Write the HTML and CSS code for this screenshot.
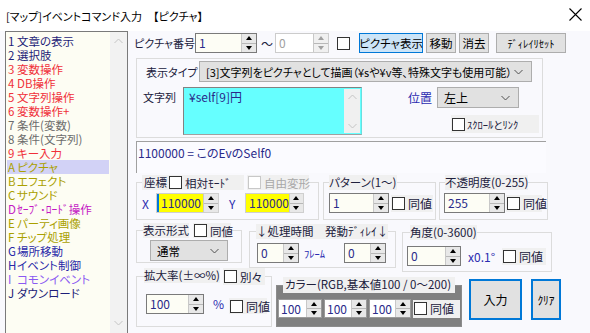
FILE: index.html
```html
<!DOCTYPE html>
<html lang="ja">
<head>
<meta charset="utf-8">
<link rel="stylesheet" href="styles.css">
</head>
<body>
<div class="titlebar">
  <span class="title">[マップ]イベントコマンド入力　【ピクチャ】</span>
  <svg class="close" width="13" height="13" viewBox="0 0 13 13"><path d="M0.5 0.5 L12.5 12.5 M12.5 0.5 L0.5 12.5" stroke="#000" stroke-width="1.1" fill="none"/></svg>
</div>
<div class="main">
  <div class="cmdlist">
    <ul class="items">
      <li class="c-navy"><span class="no">1</span>文章の表示</li>
      <li class="c-navy"><span class="no">2</span>選択肢</li>
      <li class="c-red"><span class="no">3</span>変数操作</li>
      <li class="c-red"><span class="no">4</span>DB操作</li>
      <li class="c-red"><span class="no">5</span>文字列操作</li>
      <li class="c-red"><span class="no">6</span>変数操作+</li>
      <li class="c-gray"><span class="no">7</span>条件(変数)</li>
      <li class="c-gray"><span class="no">8</span>条件(文字列)</li>
      <li class="c-red"><span class="no">9</span>キー入力</li>
      <li class="c-olive sel"><span class="no">A</span>ピクチャ</li>
      <li class="c-olive"><span class="no">B</span>エフェクト</li>
      <li class="c-olive"><span class="no">C</span>サウンド</li>
      <li class="c-mag"><span class="no">D</span>ｾｰﾌﾞ･ﾛｰﾄﾞ操作</li>
      <li class="c-olive"><span class="no">E</span>パーティ画像</li>
      <li class="c-olive"><span class="no">F</span>チップ処理</li>
      <li class="c-blue"><span class="no">G</span>場所移動</li>
      <li class="c-blue"><span class="no">H</span>イベント制御</li>
      <li class="c-violet"><span class="no">I</span>コモンイベント</li>
      <li class="c-navy"><span class="no">J</span>ダウンロード</li>
    </ul>
    <div class="vscroll">
      <svg width="9" height="6" viewBox="0 0 9 6"><path d="M0.5 5 L4.5 1 L8.5 5" stroke="#c4c4c4" fill="none"/></svg>
      <svg width="9" height="6" viewBox="0 0 9 6"><path d="M0.5 1 L4.5 5 L8.5 1" stroke="#c4c4c4" fill="none"/></svg>
    </div>
  </div>

  <div class="panel">
    <div class="row1">
      <span class="lbl w-num">ピクチャ番号</span>
      <span class="spin w62"><span class="val">1</span><span class="arrows"><i class="up"></i><i class="dn"></i></span></span>
      <span class="tilde">～</span>
      <span class="spin w54 disabled"><span class="val">0</span><span class="arrows"><i class="up"></i><i class="dn"></i></span></span>
      <span class="box top-cb"></span>
      <span class="btn b-show">ピクチャ表示</span>
      <span class="btn b-move">移動</span>
      <span class="btn b-erase">消去</span>
      <span class="btn b-delay">ﾃﾞｨﾚｲﾘｾｯﾄ</span>
    </div>

    <div class="typebox">
      <div class="type-row">
        <span class="lbl w-type">表示タイプ</span>
        <span class="combo w-typecombo"><span class="ctext">[3]文字列をピクチャとして描画（¥sや¥v等、特殊文字も使用可能）</span><svg class="chev" width="9" height="6" viewBox="0 0 9 6"><path d="M0.5 1 L4.5 5 L8.5 1" stroke="#505050" fill="none"/></svg></span>
      </div>
      <div class="str-row">
        <span class="lbl w-str">文字列</span>
        <div class="strarea">
          <span class="strtext">¥self[9]円</span>
          <span class="areascroll">
            <svg width="9" height="6" viewBox="0 0 9 6"><path d="M0.5 5 L4.5 1 L8.5 5" stroke="#c4c4c4" fill="none"/></svg>
            <svg width="9" height="6" viewBox="0 0 9 6"><path d="M0.5 1 L4.5 5 L8.5 1" stroke="#c4c4c4" fill="none"/></svg>
          </span>
        </div>
        <div class="poscol">
          <div class="pos-row">
            <span class="lbl blue w-pos">位置</span>
            <span class="combo w-poscombo"><span class="ctext">左上</span><svg class="chev" width="9" height="6" viewBox="0 0 9 6"><path d="M0.5 1 L4.5 5 L8.5 1" stroke="#505050" fill="none"/></svg></span>
          </div>
          <label class="chk scrolllink"><span class="box"></span><span class="small">ｽｸﾛｰﾙとﾘﾝｸ</span></label>
        </div>
      </div>
    </div>

    <div class="info">1100000 = このEvのSelf0</div>

    <div class="grouprow gr1">
      <fieldset class="grp g-coord">
        <legend><span class="lg">座標</span><label class="chk lgchk w76"><span class="box"></span>相対ﾓｰﾄﾞ</label><label class="chk lgchk dis w62"><span class="box"></span>自由変形</label></legend>
        <div class="gbody coord-body">
          <span class="axis w-x">X</span>
          <span class="spin w63 yellow focus"><span class="val">110000</span><span class="arrows"><i class="up"></i><i class="dn"></i></span></span>
          <span class="axis w-y">Y</span>
          <span class="spin w59 yellow"><span class="val">110000</span><span class="arrows"><i class="up"></i><i class="dn"></i></span></span>
        </div>
      </fieldset>
      <fieldset class="grp g-pat">
        <legend><span class="lg">パターン(1～)</span></legend>
        <div class="gbody pat-body">
          <span class="spin w60"><span class="val">1</span><span class="arrows"><i class="up"></i><i class="dn"></i></span></span>
          <label class="chk bgchk w42"><span class="box"></span>同値</label>
        </div>
      </fieldset>
      <fieldset class="grp g-opa">
        <legend><span class="lg">不透明度(0-255)</span></legend>
        <div class="gbody opa-body">
          <span class="spin w61"><span class="val">255</span><span class="arrows"><i class="up"></i><i class="dn"></i></span></span>
          <label class="chk bgchk w36"><span class="box"></span>同値</label>
        </div>
      </fieldset>
    </div>

    <div class="grouprow gr2">
      <fieldset class="grp g-fmt">
        <legend><span class="lg">表示形式</span><label class="chk lgchk w38 ml4"><span class="box"></span>同値</label></legend>
        <div class="gbody fmt-body">
          <span class="combo w-fmtcombo"><span class="ctext">通常</span><svg class="chev" width="9" height="6" viewBox="0 0 9 6"><path d="M0.5 1 L4.5 5 L8.5 1" stroke="#505050" fill="none"/></svg></span>
        </div>
      </fieldset>
      <fieldset class="grp g-proc">
        <legend><span class="lg">↓処理時間　発動ﾃﾞｨﾚｲ↓</span></legend>
        <div class="gbody proc-body">
          <span class="spin w42"><span class="val">0</span><span class="arrows"><i class="up"></i><i class="dn"></i></span></span>
          <span class="unit small w-frame">ﾌﾚｰﾑ</span>
          <span class="spin w42"><span class="val">0</span><span class="arrows"><i class="up"></i><i class="dn"></i></span></span>
        </div>
      </fieldset>
      <fieldset class="grp g-ang">
        <legend><span class="lg">角度(0-3600)</span></legend>
        <div class="gbody ang-body">
          <span class="spin w54"><span class="val">0</span><span class="arrows"><i class="up"></i><i class="dn"></i></span></span>
          <span class="unit latin w-deg">x0.1°</span>
          <label class="chk bgchk w44"><span class="box"></span>同値</label>
        </div>
      </fieldset>
    </div>

    <div class="grouprow gr3">
      <fieldset class="grp g-scale">
        <legend><span class="lg">拡大率(±∞%)</span><label class="chk lgchk tall w42 ml3"><span class="box"></span>別々</label></legend>
        <div class="gbody scale-body">
          <span class="spin w58"><span class="val">100</span><span class="arrows"><i class="up"></i><i class="dn"></i></span></span>
          <span class="unit latin w-pct">%</span>
          <label class="chk bgchk w38 pct-chk"><span class="box"></span>同値</label>
        </div>
      </fieldset>
      <fieldset class="grp g-color">
        <legend><span class="lg colorlg">カラー(RGB,基本値100 / 0～200)</span></legend>
        <div class="gbody color-body">
          <span class="spin w44 white"><span class="val">100</span><span class="arrows"><i class="up"></i><i class="dn"></i></span></span>
          <span class="spin w43 white"><span class="val">100</span><span class="arrows"><i class="up"></i><i class="dn"></i></span></span>
          <span class="spin w42 white"><span class="val">100</span><span class="arrows"><i class="up"></i><i class="dn"></i></span></span>
          <label class="chk bgchk light w47"><span class="box"></span>同値</label>
        </div>
      </fieldset>
      <span class="bigbtn b-enter">入力</span>
      <span class="bigbtn b-clear">ｸﾘｱ</span>
    </div>
  </div>
</div>
</body>
</html>
```

FILE: styles.css
```css
* { box-sizing: border-box; }
html, body { margin: 0; padding: 0; }
body {
  width: 590px;
  height: 333px;
  overflow: hidden;
  background: #f9f9fd;
  font-family: "Noto Sans CJK JP", "Noto Sans", sans-serif;
  font-feature-settings: "palt";
  font-size: 11px;
  color: #20203c;
}

/* title bar */
.titlebar {
  height: 31px;
  background: #ffffff;
  display: flex;
  align-items: center;
  justify-content: space-between;
  padding: 0 8px 0 6px;
}
.title { font-size: 11px; color: #000; }
.close { margin-top: -2px; }

.main { display: flex; align-items: flex-start; }

/* left list */
.cmdlist {
  margin-left: 5px;
  width: 123px;
  height: 310px;
  border: 1px solid #7a7a7a;
  border-bottom: none;
  background: #fdfdf3;
  display: flex;
}
.items {
  list-style: none;
  margin: 0;
  padding: 2px 0 0 1px;
  width: 103px;
  font-size: 11.5px;
  line-height: 14px;
}
.items li { height: 14px; white-space: nowrap; display: flex; }
.items li .no { width: 10px; padding-left: 1px; }
.items li.sel { background: #d2d2f6; }
.c-navy { color: #1e1e78; }
.c-red { color: #f0303a; }
.c-gray { color: #6c6c6c; }
.c-olive { color: #aaa000; }
.c-mag { color: #c418c4; }
.c-blue { color: #2828a8; }
.c-violet { color: #8a5af2; }
.vscroll {
  width: 17px;
  margin-left: auto;
  background: #f2f2f2;
  display: flex;
  flex-direction: column;
  justify-content: space-between;
  align-items: center;
  padding: 6px 0 15px;
}

/* right panel */
.panel { margin-left: 6px; padding-top: 2px; width: 452px; }

.lbl { display: inline-block; white-space: nowrap; }
.blue { color: #2b2bb0; }
.small { font-size: 10.5px; }
.latin { font-size: 12px; }

.row1 { display: flex; align-items: center; height: 20px; }
.w-num { width: 61px; }
.tilde { width: 14px; margin-left: 4px; font-size: 12px; }
.top-cb { margin-left: 8px; }

/* spin edit */
.spin {
  display: flex;
  height: 20px;
  border: 1px solid #7a7a7a;
  background: #fdfdf5;
  color: #2a2a8a;
  font-size: 12px;
}
.spin .val { flex: 1; padding-left: 3px; line-height: 18px; }
.spin .arrows {
  width: 15px;
  display: flex;
  flex-direction: column;
  border-left: 1px solid #c8c8c8;
}
.spin .arrows i {
  flex: 1;
  background: #e8e8e8;
  display: flex;
  align-items: center;
  justify-content: center;
}
.spin .arrows i + i { border-top: 1px solid #b8b8b8; }
.spin .arrows i::before {
  content: "";
  border-left: 3px solid transparent;
  border-right: 3px solid transparent;
}
.spin .arrows .up::before { border-bottom: 4px solid #000; }
.spin .arrows .dn::before { border-top: 4px solid #000; }
.spin.disabled { border-color: #cccccc; background: #ffffff; color: #a0a0a0; }
.spin.disabled .arrows i { background: #f0f0f0; }
.spin.disabled .arrows i::before { border-bottom-color: #a0a0a0; border-top-color: #a0a0a0; }
.spin.yellow { border-color: #cfcfcf; }
.spin.yellow .val { background: #ffff00; color: #2a2a8a; }
.spin.focus .val { border-left: 2px solid #0078d7; padding-left: 2px; }
.spin.white { border-color: #9a9a9a; background: #ffffff; height: 19px; }
.spin.white .val { line-height: 17px; padding-left: 2px; }

.w62 { width: 62px; }
.w54 { width: 54px; }
.w63 { width: 63px; }
.w59 { width: 59px; }
.w60 { width: 60px; }
.w61 { width: 61px; }
.w42 { width: 42px; }
.w58 { width: 58px; }
.w44 { width: 44px; }
.w43 { width: 43px; }
.w76 { width: 76px; }
.w38 { width: 38px; }
.w36 { width: 36px; }
.w47 { width: 47px; }

/* checkbox */
.box {
  display: inline-block;
  width: 13px;
  height: 13px;
  border: 1px solid #333333;
  background: #ffffff;
  flex: none;
}
.chk { display: inline-flex; align-items: center; gap: 3px; white-space: nowrap; font-size: 12px; }
.chk.dis { color: #a8a8a8; }
.chk.dis .box { border-color: #c8c8c8; }
.bgchk { background: #f0f0f0; height: 17px; padding-left: 1px; }
.bgchk.light { background: #f0f0f0; }

/* buttons */
.btn {
  height: 20px;
  display: inline-flex;
  align-items: center;
  justify-content: center;
  background: #e1e1e1;
  border: 1px solid #adadad;
  color: #000;
  white-space: nowrap;
  font-size: 11.5px;
}
.b-show { width: 64px; margin-left: 9px; background: #cce4f7; border-color: #0078d7; }
.b-move { width: 30px; margin-left: 3px; }
.b-erase { width: 30px; margin-left: 3px; }
.b-delay { width: 70px; margin-left: 7px; font-size: 10.5px; }

/* combo */
.combo {
  display: flex;
  align-items: center;
  height: 21px;
  background: #e1e1e1;
  border: 1px solid #adadad;
  color: #000;
  padding: 0 8px 0 6px;
  font-size: 11.5px;
}
.combo .ctext { flex: 1; white-space: nowrap; overflow: hidden; }
.combo .chev { flex: none; }

/* type box */
.typebox {
  margin-top: 5px;
  margin-left: 2px;
  width: 407px;
  height: 80px;
  border: 1px solid #dcdcdc;
  padding: 2px 0 0 0;
}
.type-row { display: flex; align-items: center; padding-left: 9px; }
.w-type { width: 53px; }
.w-typecombo { width: 333px; font-size: 11px; }
.str-row { display: flex; align-items: flex-start; margin-top: 5px; padding-left: 6px; }
.w-str { width: 40px; line-height: 18px; padding-top: 1px; }
.strarea {
  width: 179px;
  height: 48px;
  background: #66ffff;
  border-top: 1px solid #828282;
  border-left: 1px solid #828282;
  border-bottom: 1px solid #a0a0a0;
  border-right: 1px solid #66e0e0;
  display: flex;
  color: #2a2a8a;
  font-size: 12px;
}
.strtext { flex: 1; padding: 1px 0 0 5px; line-height: 16px; }
.areascroll {
  width: 16px;
  background: #f0f0f0;
  margin: 1px 1px 1px 0;
  display: flex;
  flex-direction: column;
  justify-content: space-between;
  align-items: center;
  padding: 5px 0 4px;
}
.poscol { margin-left: 46px; display: flex; flex-direction: column; }
.pos-row { display: flex; align-items: center; }
.w-pos { width: 29px; font-size: 12px; }
.w-poscombo { width: 82px; font-size: 12px; }
.scrolllink {
  margin-top: 7px;
  margin-left: 43px;
  width: 88px;
  height: 18px;
  background: #f0f0f0;
  padding-left: 1px;
  gap: 2px;
}

/* info */
.info {
  margin-top: 3px;
  margin-left: 2px;
  width: 410px;
  height: 32px;
  border-top: 1px solid #a0a0a0;
  border-left: 1px solid #a0a0a0;
  background: #fbfbff;
  color: #2a2a8a;
  padding: 3px 0 0 1px;
  line-height: 16px;
  font-size: 12px;
}

/* group rows */
.grouprow { display: flex; align-items: flex-start; }
.gr1 { margin-top: 2px; height: 45px; }
.gr2 { margin-top: 3px; height: 45px; }
.gr3 { height: 59px; }

.grp {
  margin: 0;
  padding: 0;
  min-width: 0;
  border: 1px solid #dcdcdc;
}
.grp legend {
  padding: 0;
  display: flex;
  align-items: center;
  height: 15px;
}
.lg { background: #f0f0f0; line-height: 15px; height: 15px; white-space: nowrap; color: #20203c; font-size: 11.5px; }
.lgchk { background: #f0f0f0; height: 15px; padding-left: 1px; font-size: 11.5px; }
.lgchk.tall { height: 17px; }
.ml4 { margin-left: 4px; }
.ml3 { margin-left: 3px; }
.gbody { display: flex; align-items: center; }

.g-coord { margin-left: 2px; width: 183px; height: 45px; }
.g-coord legend { margin-left: 5px; }
.g-coord .lg { width: 26px; padding-left: 2px; }
.g-coord .lgchk.dis { margin-left: 3px; }
.coord-body { padding: 3px 0 0 5px; }
.axis { color: #2b2bb0; font-size: 12px; }
.w-x { width: 14px; }
.w-y { width: 16px; margin-left: 10px; }

.g-pat { margin-left: 4px; width: 113px; height: 45px; }
.g-pat legend { margin-left: 5px; }
.pat-body { padding: 3px 0 0 5px; }
.pat-body .chk { margin-left: 2px; }

.g-opa { margin-left: 3px; width: 109px; height: 45px; }
.g-opa legend { margin-left: 5px; }
.opa-body { padding: 3px 0 0 4px; }
.opa-body .chk { margin-left: 1px; }

.g-fmt { margin-left: 2px; width: 106px; height: 40px; }
.g-fmt legend { margin-left: 6px; }
.fmt-body { padding: 2px 0 0 13px; }
.w-fmtcombo { width: 78px; }

.g-proc { margin-left: 7px; margin-top: 1px; width: 147px; height: 44px; }
.g-proc legend { margin-left: 6px; }
.proc-body { padding: 4px 0 0 7px; }
.unit { color: #2b2bb0; white-space: nowrap; }
.w-frame { width: 40px; margin-left: 5px; }

.g-ang { margin-left: 6px; margin-top: 2px; width: 150px; height: 47px; }
.g-ang legend { margin-left: 7px; }
.ang-body { padding: 6px 0 0 4px; }
.w-deg { width: 34px; margin-left: 7px; }

.g-scale { margin-left: 2px; width: 136px; height: 59px; }
.g-scale legend { margin-left: 7px; height: 17px; align-items: flex-start; }
.scale-body { padding: 9px 0 0 9px; align-items: flex-start; }
.w-pct { width: 16px; margin-left: 9px; line-height: 20px; }
.pct-chk { margin-top: 4px; height: 16px; }

.g-color {
  margin-left: 4px;
  margin-top: 9px;
  width: 186px;
  height: 50px;
  background: #808080;
  border: 1px solid #8c8c8c;
}
.g-color legend { margin-left: 6px; height: 16px; }
.colorlg { width: 172px; height: 16px; padding-left: 2px; font-size: 11.5px; }
.color-body { padding: 6px 0 0 1px; gap: 2px; }
.color-body .chk { height: 18px; }

.bigbtn {
  margin-top: 11px;
  height: 41px;
  display: inline-flex;
  align-items: center;
  justify-content: center;
  background: #e1e1e1;
  border: 2px solid #0078d7;
  color: #000;
  font-size: 12px;
}
.b-enter { width: 53px; margin-left: 7px; }
.b-clear { width: 30px; margin-left: 9px; font-size: 11.5px; }
```
